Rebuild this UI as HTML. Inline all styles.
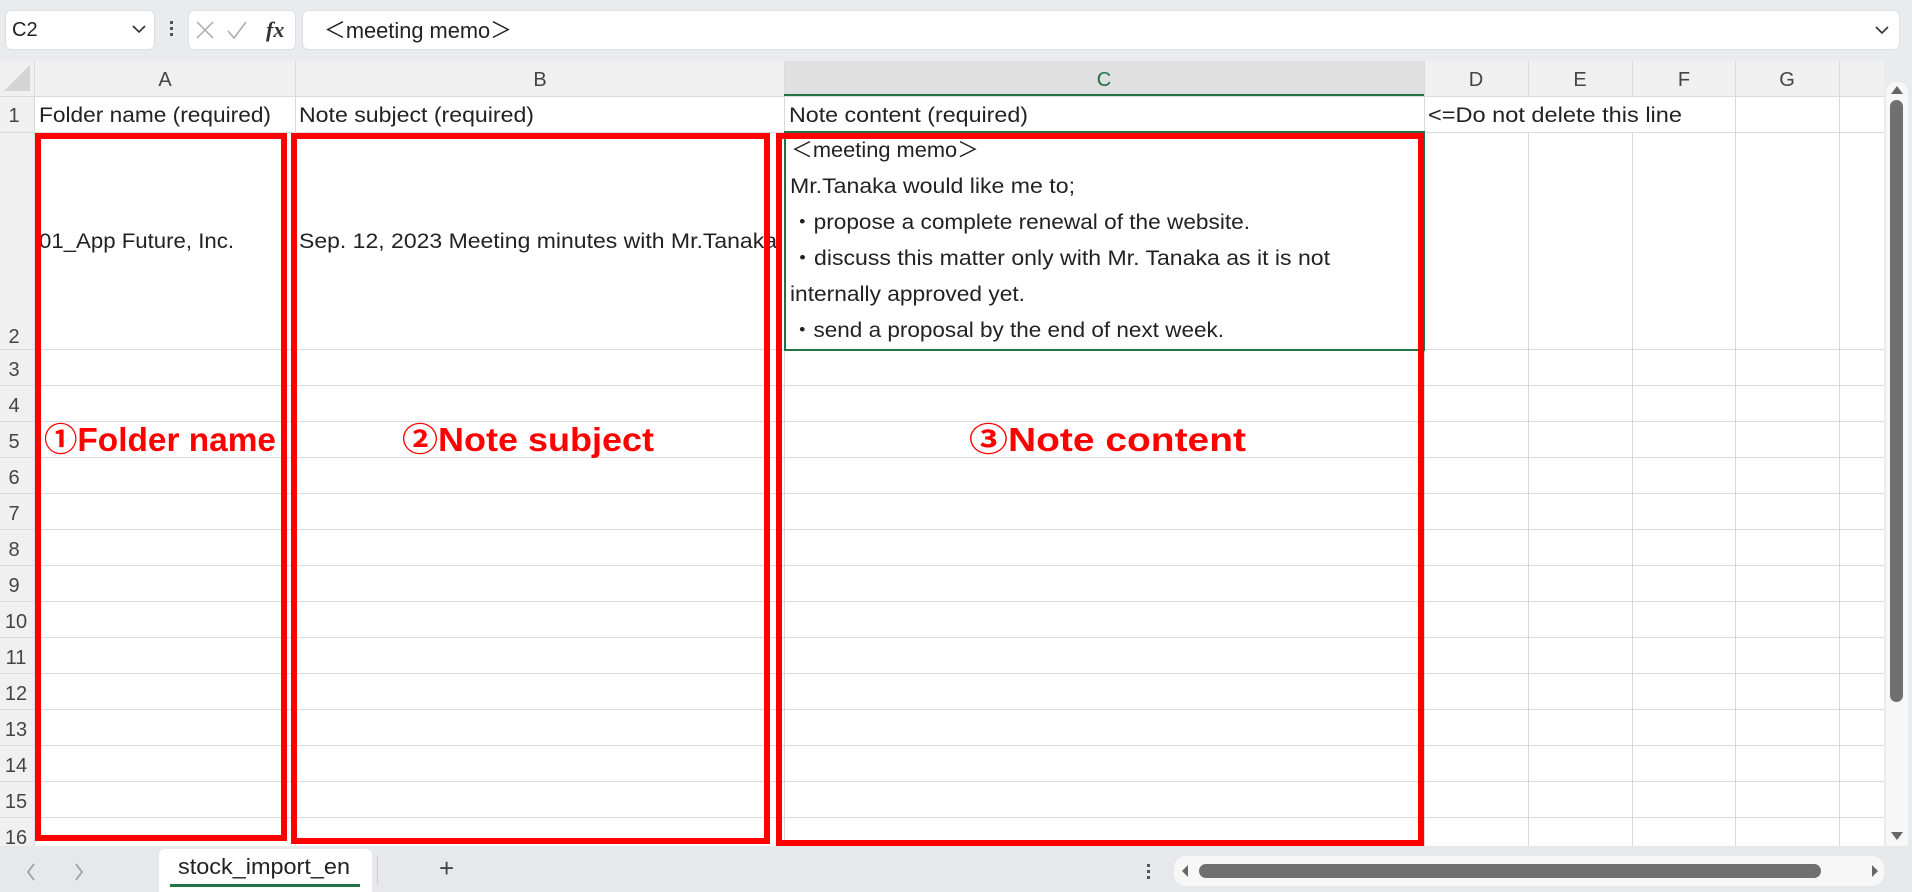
<!DOCTYPE html>
<html><head><meta charset="utf-8"><style>
*{margin:0;padding:0;box-sizing:border-box}
body{width:1912px;height:892px;overflow:hidden;background:#e9ebee;font-family:"Liberation Sans","Noto Sans CJK JP",sans-serif;color:#222;position:relative}
.a{position:absolute}
.grid{left:0;top:61px;width:1884px;height:785px;background:#fff;overflow:hidden}
.t{font-size:20px;white-space:nowrap}
.red{position:absolute;border:6px solid #f00}
</style></head><body>
<!-- toolbar -->
<div class="a" style="left:5px;top:10px;width:150px;height:40px;background:#fff;border:1px solid #dcdfe3;border-radius:6px"></div>
<div class="a t" style="left:12px;top:19px;font-size:20px">C2</div>
<svg class="a" style="left:132px;top:24px" width="14" height="10"><path d="M1 2 L7 8 L13 2" fill="none" stroke="#333" stroke-width="1.6"/></svg>
<div class="a" style="left:170px;top:21px;width:3px;height:3px;background:#555;box-shadow:0 6px #555,0 12px #555"></div>
<div class="a" style="left:188px;top:10px;width:108px;height:40px;background:#fff;border:1px solid #dcdfe3;border-radius:6px"></div>
<svg class="a" style="left:194px;top:19px" width="100" height="24"><path d="M3 3 L19 19 M19 3 L3 19" stroke="#aaa" stroke-width="1.5"/><path d="M34 12 L40 19 L52 3" fill="none" stroke="#aaa" stroke-width="1.5"/><text x="72" y="18" font-family="Liberation Serif" font-style="italic" font-weight="bold" font-size="22" fill="#333">fx</text></svg>
<div class="a" style="left:302px;top:10px;width:1598px;height:40px;background:#fff;border:1px solid #dcdfe3;border-radius:6px"></div>
<svg class="a" style="left:0;top:0" width="600" height="60"><text x="324" y="38" font-size="22" fill="#222" textLength="188" lengthAdjust="spacingAndGlyphs" font-family="Liberation Sans, Noto Sans CJK JP, sans-serif">＜meeting memo＞</text></svg>
<svg class="a" style="left:1875px;top:25px" width="14" height="10"><path d="M1 2 L7 8 L13 2" fill="none" stroke="#333" stroke-width="1.6"/></svg>

<!-- grid -->
<div class="a grid">
<svg width="1884" height="785" style="position:absolute;left:0;top:0">
<rect x="0" y="0" width="1884" height="35" fill="#f0f0f0"/>
<rect x="784" y="0" width="640" height="35" fill="#e0e0e0"/>
<rect x="0" y="0" width="34" height="785" fill="#f0f0f0"/>
<path d="M30 4 L30 30 L4 30 Z" fill="#d4d4d4"/>
<g stroke="#dadada" stroke-width="1">
<line x1="295.5" y1="0" x2="295.5" y2="785"/><line x1="784.5" y1="0" x2="784.5" y2="785"/><line x1="1424.5" y1="0" x2="1424.5" y2="785"/><line x1="1528.5" y1="0" x2="1528.5" y2="785"/><line x1="1632.5" y1="0" x2="1632.5" y2="785"/><line x1="1735.5" y1="0" x2="1735.5" y2="785"/><line x1="1839.5" y1="0" x2="1839.5" y2="785"/>
<line x1="34.5" y1="0" x2="34.5" y2="785"/>
</g>
<rect x="1526" y="36" width="200" height="35" fill="#fff"/>
<g stroke="#dadada" stroke-width="1">
<line x1="1528.5" y1="0" x2="1528.5" y2="36"/><line x1="1632.5" y1="0" x2="1632.5" y2="36"/>
<line x1="0" y1="35.5" x2="1884" y2="35.5"/><line x1="0" y1="71.5" x2="1884" y2="71.5"/><line x1="0" y1="288.5" x2="1884" y2="288.5"/>
<line x1="0" y1="324.5" x2="1884" y2="324.5"/><line x1="0" y1="360.5" x2="1884" y2="360.5"/><line x1="0" y1="396.5" x2="1884" y2="396.5"/><line x1="0" y1="432.5" x2="1884" y2="432.5"/><line x1="0" y1="468.5" x2="1884" y2="468.5"/><line x1="0" y1="504.5" x2="1884" y2="504.5"/><line x1="0" y1="540.5" x2="1884" y2="540.5"/><line x1="0" y1="576.5" x2="1884" y2="576.5"/><line x1="0" y1="612.5" x2="1884" y2="612.5"/><line x1="0" y1="648.5" x2="1884" y2="648.5"/><line x1="0" y1="684.5" x2="1884" y2="684.5"/><line x1="0" y1="720.5" x2="1884" y2="720.5"/><line x1="0" y1="756.5" x2="1884" y2="756.5"/>
</g>
<line x1="784" y1="34" x2="1424" y2="34" stroke="#217346" stroke-width="2"/>
<rect x="785" y="71" width="639" height="218" fill="none" stroke="#217346" stroke-width="2"/>
<g font-size="20" fill="#444" text-anchor="middle" font-family="Liberation Sans, sans-serif">
<text x="165" y="25">A</text><text x="540" y="25">B</text><text x="1104" y="25" fill="#217346">C</text><text x="1476" y="25">D</text><text x="1580" y="25">E</text><text x="1684" y="25">F</text><text x="1787" y="25">G</text>
<text x="14" y="61">1</text><text x="14" y="282">2</text>
<text x="14" y="315">3</text><text x="14" y="351">4</text><text x="14" y="387">5</text><text x="14" y="423">6</text><text x="14" y="459">7</text><text x="14" y="495">8</text><text x="14" y="531">9</text><text x="16" y="567">10</text><text x="16" y="603">11</text><text x="16" y="639">12</text><text x="16" y="675">13</text><text x="16" y="711">14</text><text x="16" y="747">15</text><text x="16" y="783">16</text>
</g>
<g font-size="21" fill="#222" font-family="Liberation Sans, Noto Sans CJK JP, sans-serif">
<text x="39" y="61" textLength="232" lengthAdjust="spacingAndGlyphs">Folder name (required)</text>
<text x="299" y="61" textLength="235" lengthAdjust="spacingAndGlyphs">Note subject (required)</text>
<text x="789" y="61" textLength="239" lengthAdjust="spacingAndGlyphs">Note content (required)</text>
<text x="1428" y="61" textLength="254" lengthAdjust="spacingAndGlyphs">&lt;=Do not delete this line</text>
<text x="39" y="187" textLength="195" lengthAdjust="spacingAndGlyphs">01_App Future, Inc.</text>
<text x="299" y="187" textLength="478" lengthAdjust="spacingAndGlyphs">Sep. 12, 2023 Meeting minutes with Mr.Tanaka</text>
<text x="791" y="96" textLength="188" lengthAdjust="spacingAndGlyphs">＜meeting memo＞</text>
<text x="790" y="132" textLength="285" lengthAdjust="spacingAndGlyphs">Mr.Tanaka would like me to;</text>
<text x="791" y="168" textLength="459" lengthAdjust="spacingAndGlyphs">・propose a complete renewal of the website.</text>
<text x="791" y="204" textLength="539" lengthAdjust="spacingAndGlyphs">・discuss this matter only with Mr. Tanaka as it is not</text>
<text x="790" y="240" textLength="235" lengthAdjust="spacingAndGlyphs">internally approved yet.</text>
<text x="791" y="276" textLength="433" lengthAdjust="spacingAndGlyphs">・send a proposal by the end of next week.</text>
</g>
</svg>
</div>
<div class="red" style="left:35px;top:133px;width:252px;height:708px"></div>
<div class="red" style="left:291px;top:133px;width:479px;height:711px"></div>
<div class="red" style="left:776px;top:133px;width:648px;height:713px"></div>
<svg class="a" style="left:0;top:0" width="1400" height="892">
<g fill="#f00" font-weight="bold" font-size="33" font-family="Liberation Sans, Noto Sans CJK JP, sans-serif">
<text x="44" y="451" textLength="232" lengthAdjust="spacingAndGlyphs">①Folder name</text>
<text x="402" y="451" textLength="252" lengthAdjust="spacingAndGlyphs">②Note subject</text>
<text x="969" y="451" textLength="277" lengthAdjust="spacingAndGlyphs">③Note content</text>
</g></svg>

<!-- vertical scrollbar -->
<div class="a" style="left:1886px;top:82px;width:22px;height:770px;background:#f7f7f7;border-radius:10px"></div>
<svg class="a" style="left:1889px;top:84px" width="16" height="12"><path d="M2 10 L8 2 L14 10 Z" fill="#666"/></svg>
<div class="a" style="left:1890px;top:100px;width:13px;height:602px;background:#707070;border-radius:7px"></div>
<svg class="a" style="left:1889px;top:830px" width="16" height="12"><path d="M2 2 L8 10 L14 2 Z" fill="#666"/></svg>

<!-- bottom bar -->
<div class="a" style="left:0;top:846px;width:1912px;height:46px;background:#e6e8eb"></div>
<svg class="a" style="left:24px;top:862px" width="70" height="20"><path d="M10 2 L4 10 L10 18" fill="none" stroke="#999" stroke-width="1.5"/><path d="M52 2 L58 10 L52 18" fill="none" stroke="#999" stroke-width="1.5"/></svg>
<div class="a" style="left:159px;top:849px;width:213px;height:43px;background:#fff;border-radius:6px 6px 0 0"></div>
<svg class="a" style="left:0;top:846px" width="400" height="46"><text x="178" y="28" font-size="22" fill="#222" textLength="172" lengthAdjust="spacingAndGlyphs" font-family="Liberation Sans, sans-serif">stock_import_en</text></svg>
<div class="a" style="left:170px;top:884px;width:190px;height:3px;background:#217346"></div>
<div class="a" style="left:377px;top:856px;width:1px;height:28px;background:#ccc"></div>
<div class="a t" style="left:439px;top:853px;font-size:26px;color:#444">+</div>
<div class="a" style="left:1147px;top:864px;width:3px;height:3px;background:#555;box-shadow:0 6px #555,0 12px #555"></div>
<div class="a" style="left:1174px;top:856px;width:710px;height:30px;background:#f7f7f7;border-radius:12px"></div>
<svg class="a" style="left:1180px;top:862px" width="700" height="18"><path d="M8 3 L2 9 L8 15 Z" fill="#666"/><path d="M692 3 L698 9 L692 15 Z" fill="#666"/></svg>
<div class="a" style="left:1199px;top:864px;width:622px;height:14px;background:#707070;border-radius:7px"></div>
</body></html>
